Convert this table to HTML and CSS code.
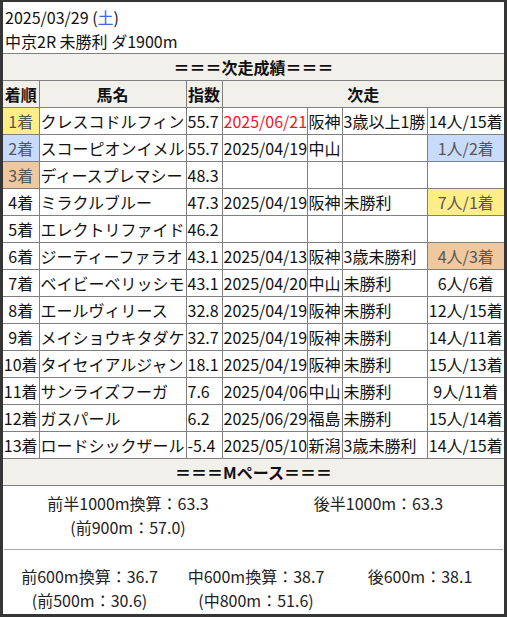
FILE: index.html
```html
<!DOCTYPE html>
<html lang="ja">
<head>
<meta charset="utf-8">
<link rel="stylesheet" href="styles.css">
</head>
<body>
<div class="card">
  <div class="head">
    <div>2025/03/29 (<span class="sat">土</span>)</div>
    <div>中京2R 未勝利 ダ1900m</div>
  </div>
  <table class="grid">
    <colgroup>
      <col class="c-rank"><col class="c-name"><col class="c-idx"><col class="c-date"><col class="c-place"><col class="c-race"><col class="c-res">
    </colgroup>
    <tr><th colspan="7" class="bar">＝＝＝次走成績＝＝＝</th></tr>
    <tr class="hrow"><th>着順</th><th>馬名</th><th>指数</th><th colspan="4">次走</th></tr>
    <tr><td class="rank gold">1着</td><td>クレスコドルフィン</td><td>55.7</td><td class="red">2025/06/21</td><td>阪神</td><td>3歳以上1勝</td><td class="res">14人/15着</td></tr>
    <tr><td class="rank silver">2着</td><td>スコーピオンイメル</td><td>55.7</td><td>2025/04/19</td><td>中山</td><td></td><td class="res silver">1人/2着</td></tr>
    <tr><td class="rank bronze">3着</td><td>ディースプレマシー</td><td>48.3</td><td></td><td></td><td></td><td class="res"></td></tr>
    <tr><td class="rank">4着</td><td>ミラクルブルー</td><td>47.3</td><td>2025/04/19</td><td>阪神</td><td>未勝利</td><td class="res gold">7人/1着</td></tr>
    <tr><td class="rank">5着</td><td>エレクトリファイド</td><td>46.2</td><td></td><td></td><td></td><td class="res"></td></tr>
    <tr><td class="rank">6着</td><td>ジーティーファラオ</td><td>43.1</td><td>2025/04/13</td><td>阪神</td><td>3歳未勝利</td><td class="res bronze">4人/3着</td></tr>
    <tr><td class="rank">7着</td><td>ベイビーベリッシモ</td><td>43.1</td><td>2025/04/20</td><td>中山</td><td>未勝利</td><td class="res">6人/6着</td></tr>
    <tr><td class="rank">8着</td><td>エールヴィリース</td><td>32.8</td><td>2025/04/19</td><td>阪神</td><td>未勝利</td><td class="res">12人/15着</td></tr>
    <tr><td class="rank">9着</td><td>メイショウキタダケ</td><td>32.7</td><td>2025/04/19</td><td>阪神</td><td>未勝利</td><td class="res">14人/11着</td></tr>
    <tr><td class="rank">10着</td><td>タイセイアルジャン</td><td>18.1</td><td>2025/04/19</td><td>阪神</td><td>未勝利</td><td class="res">15人/13着</td></tr>
    <tr><td class="rank">11着</td><td>サンライズフーガ</td><td>7.6</td><td>2025/04/06</td><td>中山</td><td>未勝利</td><td class="res">9人/11着</td></tr>
    <tr><td class="rank">12着</td><td>ガスパール</td><td>6.2</td><td>2025/06/29</td><td>福島</td><td>未勝利</td><td class="res">15人/14着</td></tr>
    <tr><td class="rank">13着</td><td>ロードシックザール</td><td>-5.4</td><td>2025/05/10</td><td>新潟</td><td>3歳未勝利</td><td class="res">14人/15着</td></tr>
    <tr><th colspan="7" class="bar">＝＝＝Mペース＝＝＝</th></tr>
  </table>
  <div class="pace">
    <div class="pace-top">
      <div>前半1000m換算：63.3<br>(前900m：57.0)</div>
      <div>後半1000m：63.3</div>
    </div>
    <div class="divider"></div>
    <div class="pace-bottom">
      <div>前600m換算：36.7<br>(前500m：30.6)</div>
      <div>中600m換算：38.7<br>(中800m：51.6)</div>
      <div>後600m：38.1</div>
    </div>
  </div>
</div>
</body>
</html>
```

FILE: styles.css
```css
html, body {
  margin: 0;
  padding: 0;
  background: #fff;
}

.card {
  width: 507px;
  height: 617px;
  box-sizing: border-box;
  border: 3px solid #353535;
  border-top-width: 2px;
  background: #fff;
  font-family: "Noto Sans CJK JP", "Noto Sans", sans-serif;
  font-size: 16px;
  color: #111;
  overflow: hidden;
}

.head {
  padding: 3px 2px 0;
  line-height: 24px;
  border-bottom: 1px solid #808080;
}

.sat {
  color: #4169d8;
}

.grid {
  width: 501px;
  table-layout: fixed;
  border-collapse: collapse;
  border-style: hidden;
}

.c-rank { width: 36px; }
.c-name { width: 147px; }
.c-idx { width: 36px; }
.c-date { width: 85px; }
.c-place { width: 35px; }
.c-race { width: 85px; }
.c-res { width: 77px; }

.grid th,
.grid td {
  border: 1px solid #808080;
  padding: 1px 1px;
  line-height: 24px;
  height: 24px;
  white-space: nowrap;
  overflow: hidden;
  text-align: left;
  font-weight: normal;
}

.grid th {
  font-weight: bold;
  text-align: center;
  background: #f2f0eb;
}

.grid .bar {
  background: #f2f0eb;
  font-weight: bold;
  text-align: center;
}

.grid td.rank,
.grid td.res {
  text-align: center;
  padding: 1px 0;
}

.red {
  color: #f5141e;
}

.gold {
  background: #ffee88;
  color: #555;
}

.silver {
  background: #c9dbfb;
  color: #555;
}

.bronze {
  background: #efc8a0;
  color: #555;
}

.pace {
  border-top: 1px solid #808080;
  color: #222;
  line-height: 24px;
  text-align: center;
}

.pace-top {
  display: grid;
  grid-template-columns: 250px 1fr;
  padding: 5px 0 10px;
}

.divider {
  margin: 0 1px;
  border-top: 1px solid #a8a8a8;
}

.pace-bottom {
  display: grid;
  grid-template-columns: 173px 160px 1fr;
  padding-top: 14px;
}
```
